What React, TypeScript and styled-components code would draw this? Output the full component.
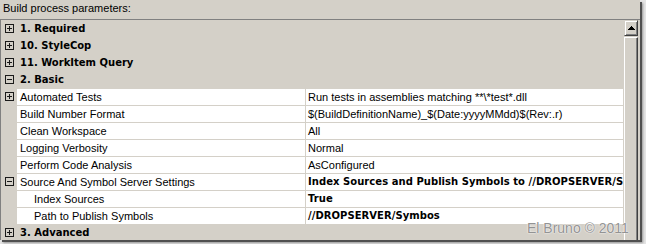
import React from 'react';
import styled, { createGlobalStyle } from 'styled-components';

const Global = createGlobalStyle`
  html, body { margin: 0; padding: 0; background: #e4e4e4; }
  body { width: 646px; height: 244px; overflow: hidden; }
`;

const Page = styled.div`
  width: 646px;
  height: 244px;
  background: #e4e4e4;
`;

const Window = styled.div`
  position: relative;
  width: 640px;
  height: 240px;
  background: #d4d0c8;
  overflow: hidden;
  box-shadow: 2px 2px 0 #505050, 3px 3px 2px rgba(0, 0, 0, 0.35);
  font-family: "Liberation Sans", Arial, sans-serif;
  font-size: 11px;
  color: #000;
`;

const Label = styled.div`
  height: 19px;
  line-height: 16px;
  padding-left: 3px;
`;

const Grid = styled.div`
  display: flex;
  height: 221px;
  border-top: 1px solid #808080;
  border-left: 1px solid #808080;
  padding-right: 2px;
`;

const Rows = styled.div`
  width: 623px;
  display: flex;
  flex-direction: column;
  overflow: hidden;
`;

const Row = styled.div`
  display: flex;
  flex-shrink: 0;
  height: 17px;
`;

const Margin = styled.div`
  width: 16px;
  flex-shrink: 0;
  display: flex;
  align-items: center;
  padding-left: 4px;
  box-sizing: border-box;
`;

const CategoryTitle = styled.div`
  font-family: "DejaVu Sans", Verdana, sans-serif;
  font-weight: bold;
  font-size: 10px;
  line-height: 16px;
  padding: 1px 0 0 3px;
  white-space: nowrap;
`;

const Cell = styled.div<{ $w: number; $sep?: boolean }>`
  width: ${(p) => p.$w}px;
  flex-shrink: 0;
  box-sizing: border-box;
  background: #fff;
  border-top: 1px solid #d4d0c8;
  ${(p) => (p.$sep ? 'border-left: 1px solid #d4d0c8;' : '')}
  line-height: 16px;
  white-space: nowrap;
  overflow: hidden;
`;

const NameText = styled.span<{ $indent?: boolean }>`
  display: block;
  padding-left: ${(p) => (p.$indent ? 17 : 3)}px;
`;

const ValueText = styled.span<{ $bold?: boolean }>`
  display: block;
  padding-left: 2px;
  ${(p) =>
    p.$bold
      ? `font-family: "DejaVu Sans", Verdana, sans-serif; font-weight: bold; font-size: 10px; letter-spacing: 0.05px;`
      : ''}
`;

const Scrollbar = styled.div`
  width: 14px;
  flex-shrink: 0;
  display: flex;
  flex-direction: column;
  margin-left: 1px;
`;

const ScrollButton = styled.div`
  height: 16px;
  box-sizing: border-box;
  display: flex;
  align-items: center;
  justify-content: center;
  background: #d4d0c8;
  border-top: 1px solid #d4d0c8;
  border-left: 1px solid #d4d0c8;
  border-right: 1px solid #404040;
  border-bottom: 1px solid #404040;
  box-shadow: inset 1px 1px 0 #fff, inset -1px -1px 0 #808080;
`;

const Thumb = styled.div`
  flex: 1;
  margin-top: 1px;
  background: #d4d0c8;
  border-top: 1px solid #fff;
  border-left: 1px solid #fff;
  border-right: 1px solid #404040;
  box-shadow: inset -1px 0 0 #808080;
`;

const Watermark = styled.div`
  position: absolute;
  left: 527px;
  top: 220px;
  font-family: "Liberation Sans", Arial, sans-serif;
  font-size: 14px;
  line-height: 16px;
  color: #939393;
  text-shadow: 0 0 2px #fff, 0 0 1px #fff;
  white-space: nowrap;
`;

const Expander = ({ open }: { open?: boolean }) => (
  <svg width="9" height="9" viewBox="0 0 9 9" shapeRendering="crispEdges">
    <rect x="0.5" y="0.5" width="8" height="8" fill="none" stroke="#1a1a1a" />
    <line x1="2" y1="4.5" x2="7" y2="4.5" stroke="#1a1a1a" />
    {!open && <line x1="4.5" y1="2" x2="4.5" y2="7" stroke="#1a1a1a" />}
  </svg>
);

const UpArrow = () => (
  <svg width="7" height="4" viewBox="0 0 7 4" shapeRendering="crispEdges">
    <polygon points="3.5,0 7,4 0,4" fill="#000" />
  </svg>
);

type Prop = {
  name: string;
  value: string;
  bold?: boolean;
  indent?: boolean;
  expander?: 'open' | 'closed';
};

const props: Prop[] = [
  { name: 'Automated Tests', value: 'Run tests in assemblies matching **\\*test*.dll', expander: 'closed' },
  { name: 'Build Number Format', value: '$(BuildDefinitionName)_$(Date:yyyyMMdd)$(Rev:.r)' },
  { name: 'Clean Workspace', value: 'All' },
  { name: 'Logging Verbosity', value: 'Normal' },
  { name: 'Perform Code Analysis', value: 'AsConfigured' },
  {
    name: 'Source And Symbol Server Settings',
    value: 'Index Sources and Publish Symbols to //DROPSERVER/Symbos',
    bold: true,
    expander: 'open',
  },
  { name: 'Index Sources', value: 'True', bold: true, indent: true },
  { name: 'Path to Publish Symbols', value: '//DROPSERVER/Symbos', bold: true, indent: true },
];

const Category = ({ title, open }: { title: string; open?: boolean }) => (
  <Row>
    <Margin>
      <Expander open={open} />
    </Margin>
    <CategoryTitle>{title}</CategoryTitle>
  </Row>
);

export default function App() {
  return (
    <Page>
      <Global />
      <Window>
        <Label>Build process parameters:</Label>
        <Grid>
          <Rows>
            <Category title="1. Required" />
            <Category title="10. StyleCop" />
            <Category title="11. WorkItem Query" />
            <Category title="2. Basic" open />
            {props.map((p) => (
              <Row key={p.name}>
                <Margin>{p.expander && <Expander open={p.expander === 'open'} />}</Margin>
                <Cell $w={288}>
                  <NameText $indent={p.indent}>{p.name}</NameText>
                </Cell>
                <Cell $w={318} $sep>
                  <ValueText $bold={p.bold}>{p.value}</ValueText>
                </Cell>
              </Row>
            ))}
            <Category title="3. Advanced" />
          </Rows>
          <Scrollbar>
            <ScrollButton>
              <UpArrow />
            </ScrollButton>
            <Thumb />
          </Scrollbar>
        </Grid>
        <Watermark>El Bruno © 2011</Watermark>
      </Window>
    </Page>
  );
}
